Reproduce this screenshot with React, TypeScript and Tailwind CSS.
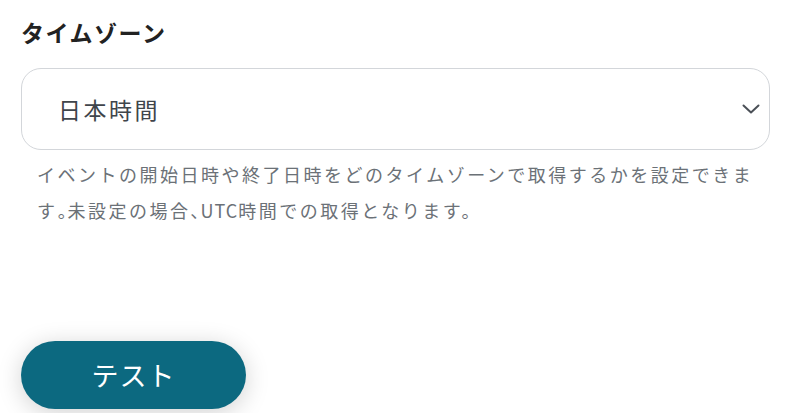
export default function App() {
	return (
		<div
			className="w-[801px] h-[413px] bg-white overflow-hidden flex flex-col px-[21px] pt-[17px]"
			style={{ fontFamily: '"Noto Sans CJK JP", "Noto Sans", sans-serif' }}
		>
			<label className="text-[23px] font-bold leading-[30px] tracking-[1.5px] text-[#222]">
				タイムゾーン
			</label>
			<div className="mt-[21px] h-[82px] w-[749px] rounded-[20px] border border-[#d3d6da] flex items-center justify-between pl-[36px] pr-[8px]">
				<span className="text-[23px] tracking-[2.5px] text-[#3f454b]">日本時間</span>
				<svg width="18" height="10" viewBox="0 0 18 10" fill="none" className="mr-[1px]">
					<path d="M1.5 1.5 L9 8.5 L16.5 1.5" stroke="#4b5057" strokeWidth="2" strokeLinecap="round" strokeLinejoin="round" />
				</svg>
			</div>
			<p className="mt-[6px] pl-[16px] w-[749px] text-[18px] leading-[36px] tracking-[2.5px] text-[#6b7177]">
				イベントの開始日時や終了日時をどのタイムゾーンで取得するかを設定できます
				<span className="[font-feature-settings:'palt'] tracking-[1px]">。</span>
				未設定の場合
				<span className="[font-feature-settings:'palt'] tracking-[1px]">、</span>
				<span className="tracking-[1px]">UTC</span>時間での取得となります。
			</p>
			<div className="mt-auto mb-[4px]">
				<button className="w-[225px] h-[68px] rounded-full bg-[#0c6980] text-white text-[27px] tracking-[1px] shadow-[0_4px_24px_rgba(0,0,0,0.18)]">
					テスト
				</button>
			</div>
		</div>
	);
}
